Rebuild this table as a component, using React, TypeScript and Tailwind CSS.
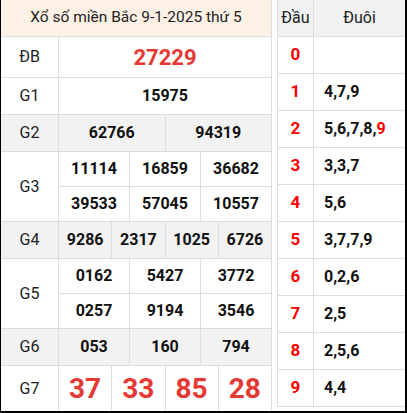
import React from "react";

const font = { fontFamily: "Roboto, 'Noto Sans', sans-serif" };

type Row = { label: string; gray?: boolean; lines: string[][]; h: string; big?: "db" | "g7" };

const rows: Row[] = [
  { label: "ĐB", lines: [["27229"]], h: "h-[41px]", big: "db" },
  { label: "G1", lines: [["15975"]], h: "h-[37px]" },
  { label: "G2", gray: true, lines: [["62766", "94319"]], h: "h-[37px]" },
  { label: "G3", lines: [["11114", "16859", "36682"], ["39533", "57045", "10557"]], h: "h-[70px]" },
  { label: "G4", gray: true, lines: [["9286", "2317", "1025", "6726"]], h: "h-[37px]" },
  { label: "G5", lines: [["0162", "5427", "3772"], ["0257", "9194", "3546"]], h: "h-[70px]" },
  { label: "G6", gray: true, lines: [["053", "160", "794"]], h: "h-[37px]" },
  { label: "G7", lines: [["37", "33", "85", "28"]], h: "h-[46px]", big: "g7" },
];

const tails: { d: string; v: React.ReactNode }[] = [
  { d: "0", v: "" },
  { d: "1", v: "4,7,9" },
  { d: "2", v: (<>5,6,7,8,<span className="text-[#ff0000]">9</span></>) },
  { d: "3", v: "3,3,7" },
  { d: "4", v: "5,6" },
  { d: "5", v: "3,7,7,9" },
  { d: "6", v: "0,2,6" },
  { d: "7", v: "2,5" },
  { d: "8", v: "2,5,6" },
  { d: "9", v: "4,4" },
];

export default function App() {
  return (
    <div style={font} className="w-[407px] h-[413px] bg-white border-l border-l-black border-r-2 border-r-black border-b-2 border-b-black flex items-start overflow-hidden">
      {/* Left table */}
      <div className="w-[271px] h-[411px] border-r border-[#dddddd] flex flex-col shrink-0">
        <div className="h-[37px] bg-[#fdf0e5] border-b border-[#dddddd] flex items-center justify-center text-[15.5px] text-[#222222] shrink-0">
          Xổ số miền Bắc 9-1-2025 thứ 5
        </div>
        {rows.map((r) => (
          <div
            key={r.label}
            className={`${r.h} flex shrink-0 border-b border-[#dddddd] ${r.gray ? "bg-[#f2f2f2]" : "bg-white"}`}
          >
            <div className="w-[58px] border-r border-[#dddddd] flex items-center justify-center text-[16px] text-[#222222] shrink-0">
              {r.label}
            </div>
            <div className="flex-1 flex flex-col">
              {r.lines.map((line, li) => (
                <div
                  key={li}
                  className={`flex-1 flex ${li > 0 ? "border-t border-[#dddddd]" : ""}`}
                >
                  {line.map((n, ni) => (
                    <div
                      key={ni}
                      className={`flex-1 flex items-center justify-center font-bold ${ni > 0 ? "border-l border-[#dddddd]" : ""} ${
                        r.big === "db"
                          ? "text-[22px] text-[#e53935]"
                          : r.big === "g7"
                          ? "text-[28px] text-[#e53935]"
                          : "text-[16px] text-[#111111]"
                      }`}
                    >
                      {n}
                    </div>
                  ))}
                </div>
              ))}
            </div>
          </div>
        ))}
      </div>

      {/* Right table */}
      <div className="ml-[5px] w-[128px] border-l border-[#dddddd] flex flex-col shrink-0">
        <div className="h-[37px] bg-[#f1f1f1] border-b border-[#dddddd] flex text-[16px] text-[#222222]">
          <div className="w-[36px] border-r border-[#dddddd] flex items-center justify-center">Đầu</div>
          <div className="flex-1 flex items-center justify-center">Đuôi</div>
        </div>
        {tails.map((t) => (
          <div key={t.d} className="h-[37px] border-b border-[#dddddd] flex">
            <div className="w-[36px] border-r border-[#dddddd] flex items-center justify-center font-bold text-[17px] text-[#ff0000]">
              {t.d}
            </div>
            <div className="flex-1 flex items-center pl-[10px] font-bold text-[16px] text-[#111111]">
              {t.v}
            </div>
          </div>
        ))}
      </div>
    </div>
  );
}
